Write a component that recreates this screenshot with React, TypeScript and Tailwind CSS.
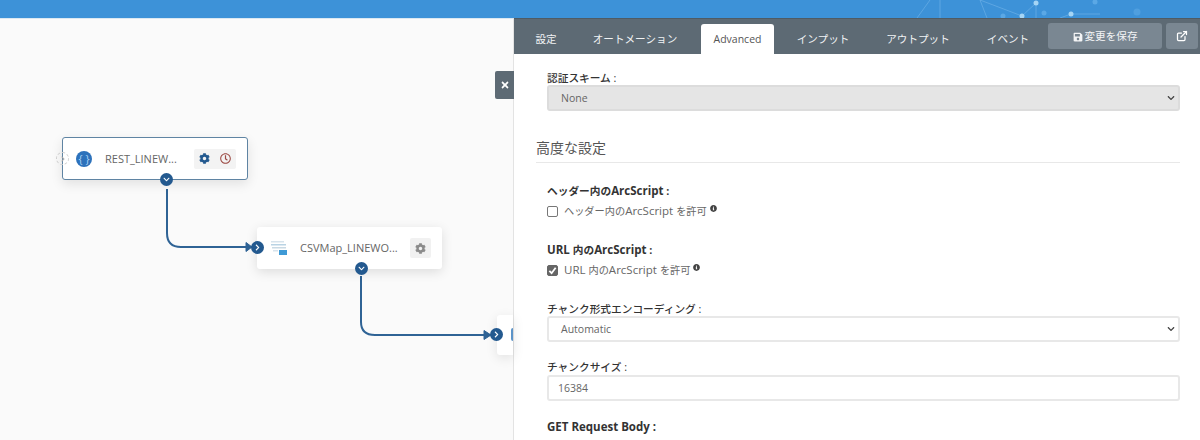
import { ReactNode } from 'react';
import { ExternalLink } from 'lucide-react';
import { FaChevronDown, FaChevronRight, FaCog, FaInfoCircle, FaRegClock, FaSave, FaTimes } from 'react-icons/fa';

const FONT = { fontFamily: '"Open Sans", "Noto Sans CJK JP", sans-serif' };

const tabs = ['設定', 'オートメーション', 'Advanced', 'インプット', 'アウトプット', 'イベント'];
const tabClasses = ['w-[64px]', 'w-[114px]', 'ml-[9px] w-[73px] text-[10.5px]', 'w-[98px]', 'w-[92px]', 'w-[84px] pl-[4px]'];

const Port = ({ down }: { down?: boolean }) => (
  <span className="flex h-[13px] w-[13px] items-center justify-center rounded-full bg-[#23598f] text-white">
    {down ? <FaChevronDown size={7} /> : <FaChevronRight size={7} />}
  </span>
);

const Label = ({ children, bold }: { children: ReactNode; bold?: boolean }) => (
  <div className={`text-[10.7px] leading-[16px] ${bold ? 'font-bold text-[#333]' : 'font-medium text-[#333]'}`}>{children}</div>
);

const Check = ({ children, checked }: { children: ReactNode; checked?: boolean }) => (
  <div className="mt-[4px] flex h-[16px] items-center text-[10.2px] text-[#666]">
    <span className={`mr-[6px] flex h-[11px] w-[11px] items-center justify-center rounded-[2px] border ${checked ? 'border-[#666] bg-[#666]' : 'border-[#777] bg-white'}`}>
      {checked && (
        <svg viewBox="0 0 10 10" className="h-[9px] w-[9px]" fill="none" stroke="white" strokeWidth="2">
          <path d="M1.5 5.5 4 8l4.5-6" />
        </svg>
      )}
    </span>
    <span className="whitespace-pre">{children}</span>
    <FaInfoCircle size={7} className="mb-[6px] ml-[3px] text-[#444]" />
  </div>
);

const Select = ({ value, gray }: { value: string; gray?: boolean }) => (
  <div className={`-mt-[1px] flex h-[26px] items-center justify-between rounded-[3px] border-2 pl-[12px] pr-[3px] text-[10.5px] text-[#666] ${gray ? 'border-[#dcdcdc] bg-[#e5e5e5]' : 'border-[#e8e8e8] bg-white'}`}>
    <span className="pt-[2px]">{value}</span>
    <FaChevronDown size={8} className="text-[#444]" />
  </div>
);

const Latin = ({ children }: { children: ReactNode }) => <span className="text-[11.5px]">{children}</span>;

const FlowLines = () => (
  <svg className="absolute left-0 top-0 h-[422px] w-[514px]" viewBox="0 0 514 422" fill="none">
    <path d="M167 170V214Q167 228 181 228H246" stroke="#2f6395" strokeWidth="2" />
    <path d="M246 223.5 252 228 246 232.5Z" fill="#2f6395" stroke="#2f6395" />
    <path d="M361 257V303Q361 316 375 316H490" stroke="#2f6395" strokeWidth="2" />
    <path d="M484 311.5 491 316 484 320.5Z" fill="#2f6395" stroke="#2f6395" />
  </svg>
);

const HeaderArt = () => (
  <svg className="absolute right-0 top-0 h-[18px] w-[300px]" viewBox="0 0 300 18" fill="none">
    <g stroke="#7fbcec" strokeWidth="0.7" opacity="0.7">
      <path d="M17 18 30 0M40 18V0M80 0 87 18M80 0 122 16M122 16 136 3M136 3V18M171 14H200M171 14 160 18" />
    </g>
    <g fill="#a5d5f5">
      <circle cx="136" cy="3" r="2.5" />
      <circle cx="122" cy="16" r="2.5" />
      <circle cx="171" cy="14" r="2.5" />
    </g>
    <g fill="#5ba8e5">
      <circle cx="103" cy="16" r="2.5" />
      <circle cx="144" cy="13" r="2.5" />
      <circle cx="195" cy="2" r="2.5" />
      <circle cx="237" cy="12" r="3.5" opacity="0.6" />
    </g>
  </svg>
);

export default function App() {
  return (
    <div className="flex h-[440px] w-[1200px] flex-col overflow-hidden bg-white" style={FONT}>
      <header className="relative h-[18px] shrink-0 bg-[#3d92d8]">
        <HeaderArt />
      </header>
      <div className="flex min-h-0 flex-1">
        <div className="relative w-[513px] shrink-0 border-t border-[#dbe8f2] bg-[#fafafa]">
          <FlowLines />
          <div className="absolute left-[62px] top-[118px] flex h-[43px] w-[186px] items-center rounded-[3px] border border-[#5f84a3] bg-white pl-[13px] shadow-[0_4px_12px_rgba(0,0,0,0.1)]">
            <span className="absolute -left-[7px] top-[14px] flex h-[13px] w-[13px] items-center justify-center rounded-full border border-dashed border-[#ccc] text-[#aaa]">
              <FaChevronRight size={6} />
            </span>
            <span className="flex h-[16px] w-[16px] items-center justify-center rounded-full bg-[#2d72bb] pb-[1px] text-[11px] leading-none text-[#a9d3f5]">{'{ }'}</span>
            <span className="ml-[13px] w-[89px] pt-[1px] text-[11px] text-[#666]">REST_LINEW...</span>
            <span className="flex h-[20px] w-[42px] items-center justify-around rounded-[2px] bg-[#f3f3f3]">
              <FaCog size={11} className="text-[#23598f]" />
              <FaRegClock size={11} className="text-[#9c4a44]" />
            </span>
            <span className="absolute left-[97px] top-[35px]">
              <Port down />
            </span>
          </div>
          <div className="absolute left-[257px] top-[208px] flex h-[42px] w-[185px] items-center rounded-[3px] bg-white pl-[14px] shadow-[0_3px_12px_rgba(0,0,0,0.12)]">
            <span className="absolute -left-[6px] top-[14px]">
              <Port />
            </span>
            <svg viewBox="0 0 16 14" className="h-[14px] w-[16px]">
              <rect x="0" y="0" width="13" height="1.5" fill="#d7e3ec" />
              <rect x="0" y="3" width="15" height="1.5" fill="#b9d3e4" />
              <rect x="1" y="6" width="14" height="1.5" fill="#c9d9e4" />
              <rect x="2" y="9" width="5" height="1.5" fill="#d7e3ec" />
              <rect x="8" y="9" width="8" height="5" fill="#3f9ad6" />
            </svg>
            <span className="ml-[13px] w-[110px] text-[11px] text-[#666]">CSVMap_LINEWO...</span>
            <span className="flex h-[20px] w-[21px] items-center justify-center rounded-[2px] bg-[#f1f1f1]">
              <FaCog size={11} className="text-[#8b8b8b]" />
            </span>
            <span className="absolute left-[98px] top-[35px]">
              <Port down />
            </span>
          </div>
          <div className="absolute left-[497px] top-[296px] h-[40px] w-[16px] rounded-l-[3px] bg-white shadow-[0_3px_12px_rgba(0,0,0,0.1)]">
            <span className="absolute -left-[7px] top-[13px]">
              <Port />
            </span>
            <span className="absolute left-[14px] top-[13px] h-[13px] w-[2px] rounded-l-full bg-[#5b93c8]" />
          </div>
          <button className="absolute -right-[1px] top-[52px] flex h-[28px] w-[19px] items-center justify-center rounded-l-[2px] bg-[#5d6a74] text-white">
            <FaTimes size={10} />
          </button>
        </div>
        <div className="flex min-w-0 flex-1 flex-col border-l border-[#e3e3e3]">
          <nav className="flex h-[36px] shrink-0 items-end border-t border-[#4f5b64] bg-[#5d6a74]">
            {tabs.map((t, i) => (
              <div
                key={t}
                className={`flex h-[30px] items-center justify-center pt-[2px] ${i === 2 ? '' : 'text-[10.6px]'} ${tabClasses[i]} ${t === 'Advanced' ? 'rounded-t-[3px] bg-white text-[#555]' : 'text-[#f1f3f4]'}`}
              >
                {t}
              </div>
            ))}
            <button className="mb-[5px] flex h-[26px] w-[114px] items-center justify-center gap-[2px] rounded-[3px] bg-[#7a8792] pt-[1px] text-[10.6px] text-[#f3f4f5]">
              <FaSave size={10} />
              変更を保存
            </button>
            <button className="mb-[5px] ml-[4px] flex h-[26px] w-[32px] items-center justify-center rounded-[3px] bg-[#7a8792] text-white">
              <ExternalLink size={12} strokeWidth={2.5} />
            </button>
          </nav>
          <main className="pl-[22px] pr-[20px] pt-[16px]">
            <div className="pl-[11px]">
              <Label>認証スキーム :</Label>
              <Select value="None" gray />
            </div>
            <h2 className="mt-[27px] border-b border-[#e8e8e8] pb-[4px] text-[14px] leading-[20px] text-[#555]">高度な設定</h2>
            <div className="pl-[11px]">
              <div className="mt-[20px]">
                <Label bold>ヘッダー内の<Latin>ArcScript</Latin> :</Label>
                <Check>ヘッダー内の<Latin>ArcScript </Latin>を許可</Check>
              </div>
              <div className="mt-[23px]">
                <Label bold><Latin>URL </Latin>内の<Latin>ArcScript</Latin> :</Label>
                <Check checked><Latin>URL </Latin>内の<Latin>ArcScript </Latin>を許可</Check>
              </div>
              <div className="mt-[23px]">
                <Label>チャンク形式エンコーディング :</Label>
                <Select value="Automatic" />
              </div>
              <div className="mt-[17px]">
                <Label>チャンクサイズ :</Label>
                <div className="flex h-[26px] items-center rounded-[3px] border-2 border-[#e8e8e8] pl-[9px] pt-[1px] text-[10.5px] text-[#666]">16384</div>
              </div>
              <div className="mt-[18px]">
                <Label bold><Latin>GET Request Body :</Latin></Label>
              </div>
            </div>
          </main>
        </div>
      </div>
    </div>
  );
}
